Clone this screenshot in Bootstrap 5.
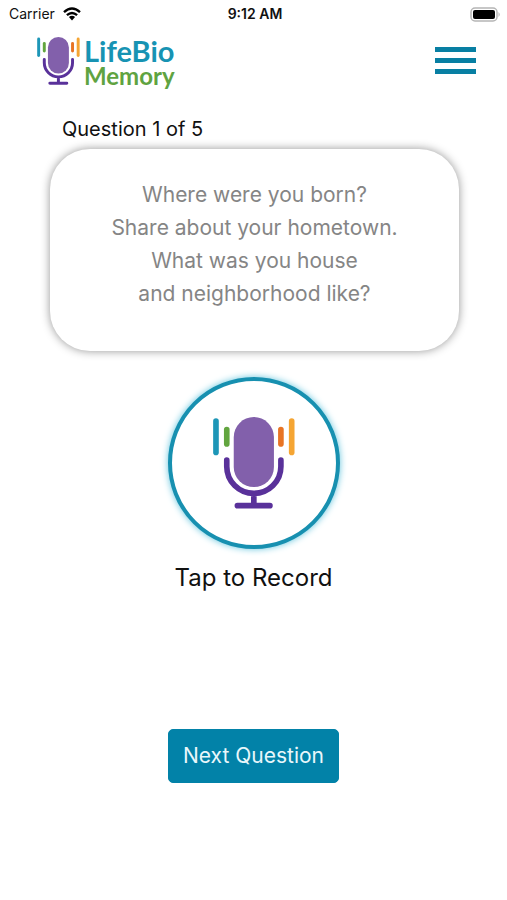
<!DOCTYPE html>
<html lang="en">
<head>
<meta charset="utf-8">
<meta name="viewport" content="width=device-width, initial-scale=1">
<title>LifeBio Memory</title>
<link rel="stylesheet" href="https://cdn.jsdelivr.net/npm/bootstrap@5.3.0/dist/css/bootstrap.min.css">
<style>
body { font-family: Inter, "Liberation Sans", sans-serif; color: #111; background: #fff; }
.status-bar { font-size: 14px; line-height: 16px; padding: 6px 6px 6px 9px; }
.status-time { font-weight: 600; }
.brand-bar { padding: 9px 31px 0 37px; }
.brand-text { font-family: Lato, "Open Sans", sans-serif; font-weight: 700; color: #1793b3; font-size: 29px; line-height: 27px; }
.brand-text .brand-sub { color: #5fa341; font-size: 24px; line-height: 24px; }
.menu-btn { line-height: 0; margin-top: 10px; }
.question-area { padding: 29px 48px 0 50px; }
.question-count { font-size: 20px; line-height: 24px; padding-left: 12px; margin-bottom: 8px; }
.question-card { border: 0; border-radius: 40px; box-shadow: 0 0 10px rgba(0,0,0,.42); min-height: 202px; padding: 29px 16px; font-size: 21px; line-height: 33px; color: #858585; }
.record-btn { width: 172px; height: 172px; margin-top: 26px; border: 4px solid #1790b0; background: #fff; box-shadow: 0 0 7px #62c4dd; }
.record-label { font-size: 24px; line-height: 30px; margin-top: 14px; }
.next-btn { --bs-btn-color: #e9f7fb; --bs-btn-bg: #0282a8; --bs-btn-border-color: #0282a8; --bs-btn-hover-color: #fff; --bs-btn-hover-bg: #02708f; --bs-btn-border-radius: 5px; --bs-btn-padding-x: 14px; --bs-btn-padding-y: 11px; font-size: 21px; line-height: 30px; margin-top: 136px; }
</style>
<script src="https://cdn.jsdelivr.net/npm/bootstrap@5.3.0/dist/js/bootstrap.bundle.min.js" defer></script>
</head>
<body>
<svg class="d-none" aria-hidden="true">
  <symbol id="mic" viewBox="174 155 246 277">
    <g fill="none" stroke-linecap="round" stroke-width="17">
      <path stroke="#1d96b7" d="M182.500 167V262"/>
      <path stroke="#62a53f" d="M215 193V236"/>
      <path stroke="#e87424" d="M378 193V236"/>
      <path stroke="#f5a533" d="M410.500 167V262"/>
      <path stroke="#59319a" d="M215 285V304A81.500 81 0 0 0 378 304V285M296.500 385V421M247 422H345"/>
    </g>
    <rect x="236" y="155" width="121" height="211" rx="60.500" fill="#8260ab"/>
  </symbol>
</svg>

<div class="status-bar row g-0 align-items-center">
  <div class="col d-flex align-items-center gap-2">
    <span>Carrier</span>
    <svg width="18" height="14" viewBox="0 0 18 14" fill="none" stroke="#000" stroke-width="2.400" aria-hidden="true">
      <path d="M1 5.200Q9-2 17 5.200M3.900 8.100Q9 3.700 14.100 8.100"/>
      <path d="M5.900 10.100Q9 7.500 12.100 10.100L9 13.500Z" fill="#000" stroke="none"/>
    </svg>
  </div>
  <div class="col-auto status-time">9:12 AM</div>
  <div class="col d-flex justify-content-end">
    <svg width="31" height="15" viewBox="0 0 31 15" role="img" aria-label="Battery full">
      <rect x="1" y="1" width="26" height="13" rx="4" fill="#fff" stroke="#b5b5b5" stroke-width="1.500"/>
      <rect x="3" y="3" width="22" height="9" rx="2" fill="#000"/>
      <path d="M28.500 5Q31 7.500 28.500 10Z" fill="#b5b5b5"/>
    </svg>
  </div>
</div>

<header class="brand-bar d-flex justify-content-between align-items-start">
  <a href="#" class="d-flex text-decoration-none">
    <svg class="me-1" width="43" height="48" aria-hidden="true"><use href="#mic"/></svg>
    <span class="brand-text"><span class="d-block">LifeBio</span><span class="brand-sub d-block">Memory</span></span>
  </a>
  <button type="button" class="btn p-0 border-0 menu-btn" aria-label="Menu">
    <svg width="41" height="28" viewBox="0 0 41 28" fill="#087fa3"><path d="M0 0H41V5H0ZM0 11H41V16H0ZM0 22H41V27H0Z"/></svg>
  </button>
</header>

<main>
  <section class="question-area">
    <h1 class="question-count fw-normal">Question 1 of 5</h1>
    <div class="card question-card text-center">
      <p class="mb-0">Where were you born?<br>Share about your hometown.<br>What was you house<br>and neighborhood like?</p>
    </div>
  </section>
  <section class="d-flex flex-column align-items-center">
    <button type="button" id="record" class="btn record-btn rounded-circle p-0" aria-labelledby="record-label">
      <svg width="82" height="92" aria-hidden="true"><use href="#mic"/></svg>
    </button>
    <label for="record" id="record-label" class="record-label">Tap to Record</label>
    <button type="button" class="btn next-btn">Next Question</button>
  </section>
</main>
</body>
</html>
